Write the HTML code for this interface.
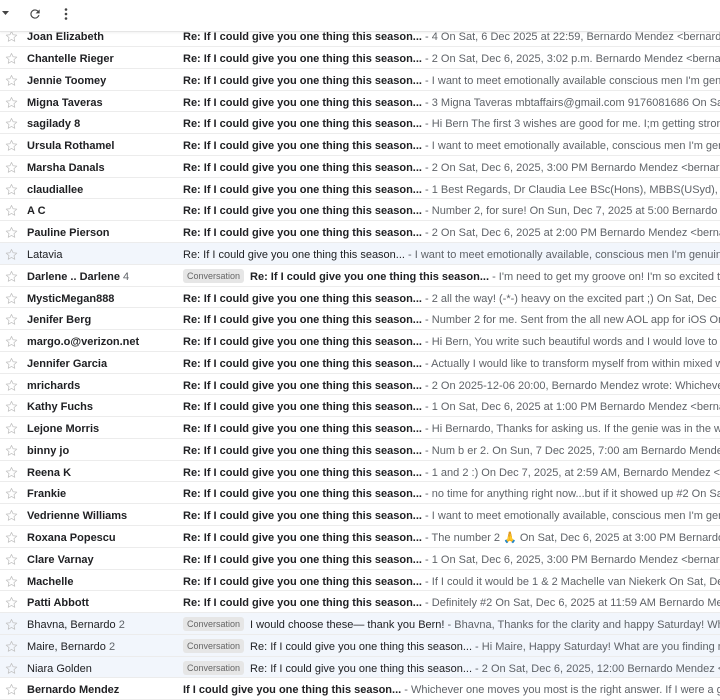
<!DOCTYPE html>
<html><head><meta charset="utf-8"><style>
*{margin:0;padding:0;box-sizing:border-box}
body{width:720px;height:700px;overflow:hidden;background:#fff;font-family:"Liberation Sans",Arial,sans-serif;color:#202124;position:relative}
.tb{position:absolute;left:0;top:0;width:720px;height:32px;background:#fff;z-index:5;border-bottom:1px solid #e6e6e6;box-shadow:0 1px 2px rgba(0,0,0,.06)}
.row{position:absolute;left:0;width:720px;height:21.77px;border-bottom:1px solid #ececec;white-space:nowrap;overflow:hidden;font-size:11px;line-height:24px}
.row.r{background:#f2f6fc}
.star{position:absolute;left:5px;top:5px}
.nm{position:absolute;left:27px;top:0;font-weight:bold}
.r .nm{font-weight:normal}
.nm .c{color:#5f6368;font-weight:normal}
.nm b{font-weight:bold}
.ct{position:absolute;left:183px;top:0}
.s{font-weight:bold}
.r .s{font-weight:normal}
.sn{color:#5f6368}
.bd{display:inline-block;background:#e6e6e6;color:#666;font-size:9px;line-height:14px;padding:0 4px;border-radius:3px;margin-right:6px;vertical-align:1px}
</style></head><body>
<div class="tb">
<svg style="position:absolute;left:2px;top:11px" width="7" height="5"><path d="M0 0L7 0L3.5 4Z" fill="#444"/></svg>
<svg style="position:absolute;left:28px;top:7px" width="14" height="14" viewBox="0 0 24 24"><path d="M17.65 6.35A7.96 7.96 0 0 0 12 4a8 8 0 1 0 7.75 10h-2.08A6 6 0 1 1 12 6c1.66 0 3.14.69 4.22 1.78L13 11h7V4z" fill="#444"/></svg>
<svg style="position:absolute;left:64px;top:8px" width="4" height="12"><circle cx="2" cy="1.5" r="1.3" fill="#444"/><circle cx="2" cy="6" r="1.3" fill="#444"/><circle cx="2" cy="10.5" r="1.3" fill="#444"/></svg>
</div>
<div id="list"></div>
<script>
var S="Re: If I could give you one thing this season...";
var X=" some more text continues here beyond the edge of the view";
var B="&lt;bernardo@example.com&gt; wrote:";
var rows=[
["Joan Elizabeth",S,"4 On Sat, 6 Dec 2025 at 22:59, Bernardo Mendez "+B],
["Chantelle Rieger",S,"2 On Sat, Dec 6, 2025, 3:02 p.m. Bernardo Mendez "+B],
["Jennie Toomey",S,"I want to meet emotionally available conscious men I'm genuinely"],
["Migna Taveras",S,"3 Migna Taveras mbtaffairs@gmail.com 9176081686 On Sat, Dec"],
["sagilady 8",S,"Hi Bern The first 3 wishes are good for me. I;m getting stronger"],
["Ursula Rothamel",S,"I want to meet emotionally available, conscious men I'm genuinely"],
["Marsha Danals",S,"2 On Sat, Dec 6, 2025, 3:00 PM Bernardo Mendez "+B],
["claudiallee",S,"1 Best Regards, Dr Claudia Lee BSc(Hons), MBBS(USyd), FRACP"],
["A C",S,"Number 2, for sure! On Sun, Dec 7, 2025 at 5:00 Bernardo Mendez"],
["Pauline Pierson",S,"2 On Sat, Dec 6, 2025 at 2:00 PM Bernardo Mendez "+B],
["Latavia",S,"I want to meet emotionally available, conscious men I'm genuinely",1],
["Darlene .. <b>Darlene</b> <span class=c>4</span>",S,"I'm need to get my groove on! I'm so excited to",0,1],
["MysticMegan888",S,"2 all the way! (-*-) heavy on the excited part ;) On Sat, Dec 6"],
["Jenifer Berg",S,"Number 2 for me. Sent from the all new AOL app for iOS On Sat"],
["margo.o@verizon.net",S,"Hi Bern, You write such beautiful words and I would love to"],
["Jennifer Garcia",S,"Actually I would like to transform myself from within mixed with"],
["mrichards",S,"2 On 2025-12-06 20:00, Bernardo Mendez wrote: Whichever one"],
["Kathy Fuchs",S,"1 On Sat, Dec 6, 2025 at 1:00 PM Bernardo Mendez "+B],
["Lejone Morris",S,"Hi Bernardo, Thanks for asking us. If the genie was in the way"],
["binny jo",S,"Num b er 2. On Sun, 7 Dec 2025, 7:00 am Bernardo Mendez"],
["Reena K",S,"1 and 2 :) On Dec 7, 2025, at 2:59 AM, Bernardo Mendez "+B],
["Frankie",S,"no time for anything right now...but if it showed up #2 On Sat"],
["Vedrienne Williams",S,"I want to meet emotionally available, conscious men I'm genuinely"],
["Roxana Popescu",S,"The number 2 🙏 On Sat, Dec 6, 2025 at 3:00 PM Bernardo"],
["Clare Varnay",S,"1 On Sat, Dec 6, 2025, 3:00 PM Bernardo Mendez "+B],
["Machelle",S,"If I could it would be 1 & 2 Machelle van Niekerk On Sat, Dec 6"],
["Patti Abbott",S,"Definitely #2 On Sat, Dec 6, 2025 at 11:59 AM Bernardo Mendez"],
["Bhavna, Bernardo <span class=c>2</span>","I would choose these— thank you Bern!","Bhavna, Thanks for the clarity and happy Saturday! What",1,1],
["Maire, Bernardo <span class=c>2</span>",S,"Hi Maire, Happy Saturday! What are you finding most",1,1],
["Niara Golden",S,"2 On Sat, Dec 6, 2025, 12:00 Bernardo Mendez "+B,1,1],
["Bernardo Mendez","If I could give you one thing this season...","Whichever one moves you most is the right answer. If I were a genie"]
];
var star='<svg class="star" width="13" height="13" viewBox="0 0 24 24"><path d="M12 2.5l2.9 6.3 6.9.7-5.2 4.6 1.5 6.8L12 17.4l-6.1 3.5 1.5-6.8L2.2 9.5l6.9-.7z" fill="none" stroke="#c0c0c0" stroke-width="1.4" stroke-linejoin="round"/></svg>';
var h="";
rows.forEach(function(r,i){
 var top=25.3+i*21.77;
 h+='<div class="row'+(r[3]?' r':'')+'" style="top:'+top+'px">'+star+'<div class="nm">'+r[0]+'</div><div class="ct">'+(r[4]?'<span class="bd">Conversation</span>':'')+'<span class="s">'+r[1]+'</span><span class="sn"> - '+r[2]+X+'</span></div></div>';
});
document.getElementById("list").innerHTML=h;
</script>
</body></html>
